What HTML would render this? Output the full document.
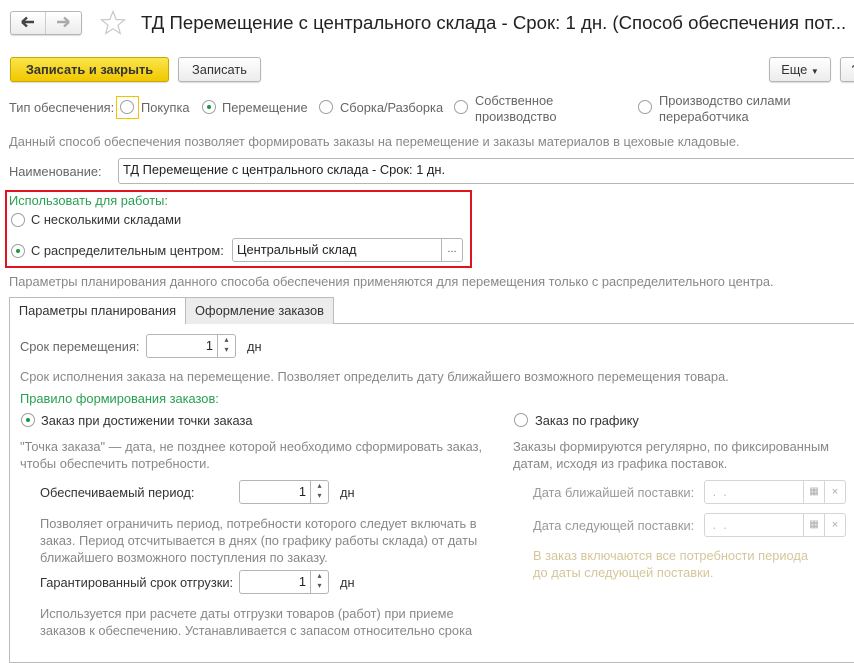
<!DOCTYPE html>
<html><head><meta charset="utf-8"><style>
*{box-sizing:border-box;margin:0;padding:0}
body{width:854px;height:635px;overflow:hidden;background:#fff;font-family:"Liberation Sans",Arial,sans-serif;font-size:12.85px;color:#333;position:relative}
.a{position:absolute;white-space:nowrap}
.g{color:#666}
.gr{color:#28a050}
.btn{position:absolute;border:1px solid #b5b5b5;border-radius:3px;background:linear-gradient(#fff,#ececec);box-shadow:0 1px 1px rgba(0,0,0,.15);text-align:center;line-height:23px;color:#333}
.rad{position:absolute;width:14px;height:14px;border:1px solid #a0a0a0;border-radius:50%;background:#fff}
.rad.on::after{content:"";position:absolute;left:4px;top:4px;width:4px;height:4px;border-radius:50%;background:#1a9a3c}
.inp{position:absolute;border:1px solid #b5b5b5;border-radius:3px;background:#fff;height:24px;line-height:22px;padding:0 4px}
.spin{position:absolute;right:0;top:0;width:18px;height:100%;border-left:1px solid #b5b5b5;font-size:8px;line-height:10px;text-align:center;color:#555}
</style></head><body>
<div class="btn" style="left:10px;top:11px;width:72px;height:24px"></div>
<div class="a" style="left:45px;top:12px;width:1px;height:22px;background:#ccc"></div>
<svg class="a" style="left:21px;top:16px" width="14" height="12"><path d="M1 6H13M1 6L6 1.5M1 6L6 10.5" stroke="#444" stroke-width="2.4" fill="none"/></svg>
<svg class="a" style="left:56px;top:16px" width="14" height="12"><path d="M1 6H13M13 6L8 1.5M13 6L8 10.5" stroke="#aaa" stroke-width="2.4" fill="none"/></svg>
<svg class="a" style="left:100px;top:10px" width="26" height="25"><path d="M13 1.5L16.2 9.5L24.5 9.8L18 15.2L20.3 23.5L13 18.8L5.7 23.5L8 15.2L1.5 9.8L9.8 9.5Z" stroke="#c8c8c8" stroke-width="1.2" fill="none"/></svg>
<div class="a" style="left:141px;top:12px;font-size:18.6px;color:#222">ТД Перемещение с центрального склада - Срок: 1 дн. (Способ обеспечения пот...</div>

<div class="btn" style="left:10px;top:57px;width:159px;height:25px;background:linear-gradient(#fbe54a,#f1c800);border-color:#c9a800;font-weight:bold;color:#333">Записать и закрыть</div>
<div class="btn" style="left:178px;top:57px;width:83px;height:25px">Записать</div>
<div class="btn" style="left:769px;top:57px;width:62px;height:25px">Еще <span style="font-size:8px">▼</span></div>
<div class="btn" style="left:840px;top:57px;width:30px;height:25px">?</div>

<div class="a g" style="left:9px;top:100px">Тип обеспечения:</div>
<div class="a" style="left:116px;top:96px;width:23px;height:23px;border:1px solid #f2c200"></div>
<div class="rad" style="left:120px;top:100px"></div>
<div class="a g" style="left:141px;top:100px">Покупка</div>
<div class="rad on" style="left:202px;top:100px"></div>
<div class="a g" style="left:222px;top:100px">Перемещение</div>
<div class="rad" style="left:319px;top:100px"></div>
<div class="a g" style="left:340px;top:100px">Сборка/Разборка</div>
<div class="rad" style="left:454px;top:100px"></div>
<div class="a g" style="left:475px;top:93px;line-height:16px">Собственное<br>производство</div>
<div class="rad" style="left:638px;top:100px"></div>
<div class="a g" style="left:659px;top:93px;line-height:16px">Производство силами<br>переработчика</div>

<div class="a" style="left:9px;top:134px;color:#888">Данный способ обеспечения позволяет формировать заказы на перемещение и заказы материалов в цеховые кладовые.</div>

<div class="a g" style="left:9px;top:164px">Наименование:</div>
<div class="inp" style="left:118px;top:158px;width:750px;height:26px;color:#222">ТД Перемещение с центрального склада - Срок: 1 дн.</div>

<div class="a" style="left:5px;top:190px;width:467px;height:78px;border:2px solid #e0141e"></div>
<div class="a gr" style="left:9px;top:193px">Использовать для работы:</div>
<div class="rad" style="left:11px;top:213px"></div>
<div class="a" style="left:31px;top:212px">С несколькими складами</div>
<div class="rad on" style="left:11px;top:244px"></div>
<div class="a" style="left:31px;top:243px">С распределительным центром:</div>
<div class="inp" style="left:232px;top:238px;width:231px;color:#222">Центральный склад<div class="spin" style="width:21px;line-height:20px;font-size:11px">...</div></div>

<div class="a" style="left:9px;top:274px;color:#888">Параметры планирования данного способа обеспечения применяются для перемещения только с распределительного центра.</div>

<div class="a" style="left:9px;top:323px;width:860px;height:340px;border:1px solid #bbb"></div>
<div class="a" style="left:185px;top:297px;width:149px;height:27px;border:1px solid #bbb;border-bottom:none;background:#ececec;text-align:center;line-height:26px;color:#333">Оформление заказов</div>
<div class="a" style="left:9px;top:297px;width:177px;height:27px;border:1px solid #bbb;border-bottom:none;background:#fff;text-align:center;line-height:26px;color:#333">Параметры планирования</div>

<div class="a g" style="left:20px;top:339px">Срок перемещения:</div>
<div class="inp" style="left:146px;top:334px;width:90px;text-align:right;padding-right:22px;color:#222">1<div class="spin">▴<br>▾</div></div>
<div class="a" style="left:247px;top:339px">дн</div>
<div class="a" style="left:20px;top:369px;color:#888">Срок исполнения заказа на перемещение. Позволяет определить дату ближайшего возможного перемещения товара.</div>
<div class="a gr" style="left:20px;top:391px">Правило формирования заказов:</div>
<div class="rad on" style="left:21px;top:413px"></div>
<div class="a" style="left:41px;top:413px">Заказ при достижении точки заказа</div>
<div class="rad" style="left:514px;top:413px"></div>
<div class="a" style="left:535px;top:413px">Заказ по графику</div>
<div class="a" style="left:20px;top:438px;line-height:17px;color:#888">"Точка заказа" — дата, не позднее которой необходимо сформировать заказ,<br>чтобы обеспечить потребности.</div>
<div class="a" style="left:513px;top:438px;line-height:17px;color:#888">Заказы формируются регулярно, по фиксированным<br>датам, исходя из графика поставок.</div>

<div class="a" style="left:40px;top:485px">Обеспечиваемый период:</div>
<div class="inp" style="left:239px;top:480px;width:90px;text-align:right;padding-right:22px;color:#222">1<div class="spin">▴<br>▾</div></div>
<div class="a" style="left:340px;top:485px">дн</div>
<div class="a" style="left:40px;top:515px;line-height:17px;color:#888">Позволяет ограничить период, потребности которого следует включать в<br>заказ. Период отсчитывается в днях (по графику работы склада) от даты<br>ближайшего возможного поступления по заказу.</div>
<div class="a" style="left:40px;top:575px">Гарантированный срок отгрузки:</div>
<div class="inp" style="left:239px;top:570px;width:90px;text-align:right;padding-right:22px;color:#222">1<div class="spin">▴<br>▾</div></div>
<div class="a" style="left:340px;top:575px">дн</div>
<div class="a" style="left:40px;top:605px;line-height:17px;color:#888">Используется при расчете даты отгрузки товаров (работ) при приеме<br>заказов к обеспечению. Устанавливается с запасом относительно срока</div>

<div class="a" style="left:533px;top:485px;color:#999">Дата ближайшей поставки:</div>
<div class="inp" style="left:704px;top:480px;width:142px;color:#bbb;border-color:#d5d5d5">&nbsp;.&nbsp;&nbsp;.<div class="spin" style="right:21px;width:21px;border-color:#d5d5d5;font-size:10px;line-height:22px;color:#aaa">▦</div><div class="spin" style="width:21px;border-color:#d5d5d5;font-size:11px;line-height:22px;color:#aaa">×</div></div>
<div class="a" style="left:533px;top:518px;color:#999">Дата следующей поставки:</div>
<div class="inp" style="left:704px;top:513px;width:142px;color:#bbb;border-color:#d5d5d5">&nbsp;.&nbsp;&nbsp;.<div class="spin" style="right:21px;width:21px;border-color:#d5d5d5;font-size:10px;line-height:22px;color:#aaa">▦</div><div class="spin" style="width:21px;border-color:#d5d5d5;font-size:11px;line-height:22px;color:#aaa">×</div></div>
<div class="a" style="left:533px;top:547px;line-height:17px;color:#d4c69a">В заказ включаются все потребности периода<br>до даты следующей поставки.</div>
</body></html>
